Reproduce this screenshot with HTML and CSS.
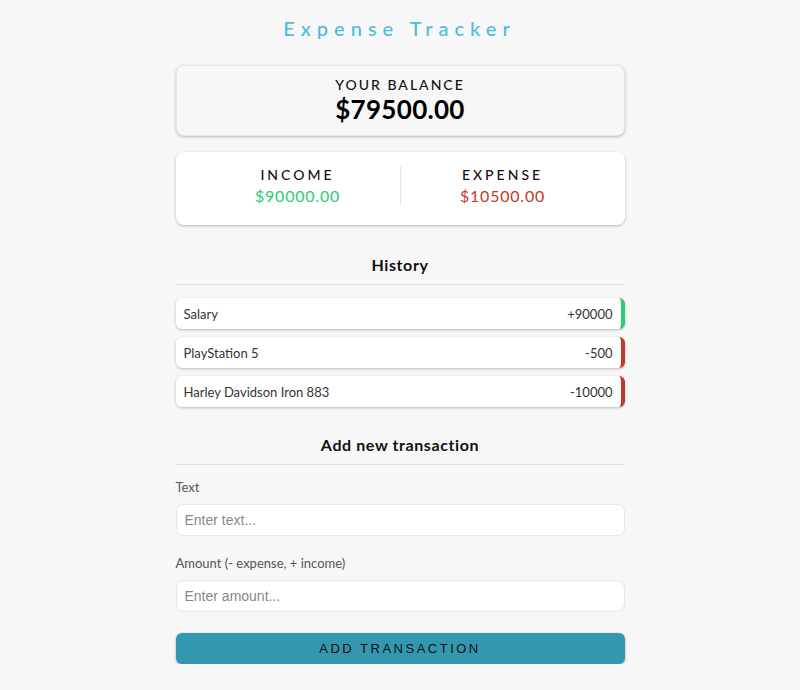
FILE: index.html
```html
<!DOCTYPE html>
<html lang="en">
<head>
    <meta charset="UTF-8">
    <meta name="viewport" content="width=device-width, initial-scale=1.0">
    <title>Expense Tracker</title>
    <link rel="stylesheet" href="styles.css">
</head>
<body>
    <h2 class="title">Expense Tracker</h2>

    <div class="container">
        <!-- Balance -->
        <div class="balance-card">
            <h4>Your Balance</h4>
            <h1 id="balance">$79500.00</h1>
        </div>

        <!-- Income / Expense -->
        <div class="inc-exp">
            <div class="inc-exp-col">
                <h4>Income</h4>
                <p class="money plus">$90000.00</p>
            </div>
            <div class="inc-exp-col">
                <h4>Expense</h4>
                <p class="money minus">$10500.00</p>
            </div>
        </div>

        <h3 class="section-title">History</h3>
        <ul class="list">
            <li class="plus">Salary <span>+90000</span></li>
            <li class="minus">PlayStation 5 <span>-500</span></li>
            <li class="minus">Harley Davidson Iron 883 <span>-10000</span></li>
        </ul>

        <h3 class="section-title form-title">Add new transaction</h3>
        <form class="form">
            <div class="form-control">
                <label for="text">Text</label>
                <input type="text" id="text" placeholder="Enter text...">
            </div>
            <div class="form-control">
                <label for="amount">Amount (- expense, + income)</label>
                <input type="number" id="amount" placeholder="Enter amount...">
            </div>
            <button class="btn" type="button">Add transaction</button>
        </form>
    </div>
</body>
</html>
```

FILE: styles.css
```css
* {
    margin: 0;
    padding: 0;
    box-sizing: border-box;
}

body {
    background: #f7f7f7;
    font-family: Lato, "Open Sans", sans-serif;
    display: flex;
    flex-direction: column;
    align-items: center;
}

.title {
    color: #4fbcd9;
    font-size: 20px;
    font-weight: 500;
    letter-spacing: 6px;
    margin-top: 16px;
    margin-right: 1px;
}

.container {
    width: 449px;
    margin: 25px auto 0;
}

h4 {
    font-size: 14px;
    font-weight: 500;
    text-transform: uppercase;
    letter-spacing: 2px;
    color: #111;
}

.balance-card {
    background: #f7f7f7;
    border: 1px solid #e6e6e6;
    border-radius: 8px;
    box-shadow: 0 1px 3px rgba(0, 0, 0, 0.25);
    text-align: center;
    padding: 10px 0 11px;
}

.balance-card h1 {
    font-size: 26px;
    font-weight: 700;
    letter-spacing: 0.3px;
    line-height: 30px;
    margin-top: 1px;
}

.inc-exp {
    background: #fff;
    border-radius: 8px;
    box-shadow: 0 1px 3px rgba(0, 0, 0, 0.25);
    display: flex;
    justify-content: space-between;
    padding: 14px 20px 20px;
    margin-top: 16px;
}

.inc-exp h4 {
    letter-spacing: 3px;
}

.inc-exp-col {
    flex: 1;
    text-align: center;
}

.inc-exp-col:first-of-type {
    border-right: 1px solid #e6e6e6;
}

.money {
    font-size: 16px;
    letter-spacing: 0.8px;
    margin-top: 3px;
}

.money.plus {
    color: #2ecc71;
}

.money.minus {
    color: #c0392b;
}

.section-title {
    font-size: 16px;
    font-weight: 700;
    letter-spacing: 0.6px;
    text-align: center;
    border-bottom: 1px solid #e0dcdc;
    padding-bottom: 10px;
    margin-top: 30px;
    margin-bottom: 13px;
    color: #111;
}

.section-title.form-title {
    margin-top: 28px;
    margin-bottom: 0;
}

.list {
    list-style: none;
}

.list li {
    background: #fff;
    border-radius: 6px;
    box-shadow: 0 1px 3px rgba(0, 0, 0, 0.25);
    color: #333;
    font-size: 13px;
    display: flex;
    justify-content: space-between;
    align-items: center;
    padding: 7px 8px;
    height: 31px;
    margin-bottom: 8px;
}

.list li.plus {
    border-right: 4px solid #2ecc71;
}

.list li.minus {
    border-right: 4px solid #c0392b;
}

label {
    display: block;
    font-size: 13px;
    color: #555;
    margin: 14px 0 9px;
}

input {
    width: 100%;
    border: 1px solid #e6e6e6;
    border-radius: 8px;
    font-family: "Liberation Sans", Arial, sans-serif;
    font-size: 14px;
    padding: 8px 8px;
    height: 32px;
    background: #fff;
}

input::placeholder {
    color: #888;
}

.form-control {
    margin-bottom: 19px;
}

.btn {
    width: 100%;
    display: block;
    background: #3497b0;
    color: #111;
    border: none;
    border-radius: 6px;
    box-shadow: 0 1px 3px rgba(0, 0, 0, 0.3);
    font-family: "Liberation Sans", Arial, sans-serif;
    font-size: 13px;
    letter-spacing: 2.5px;
    text-transform: uppercase;
    height: 31px;
    margin-top: 21px;
}
```
